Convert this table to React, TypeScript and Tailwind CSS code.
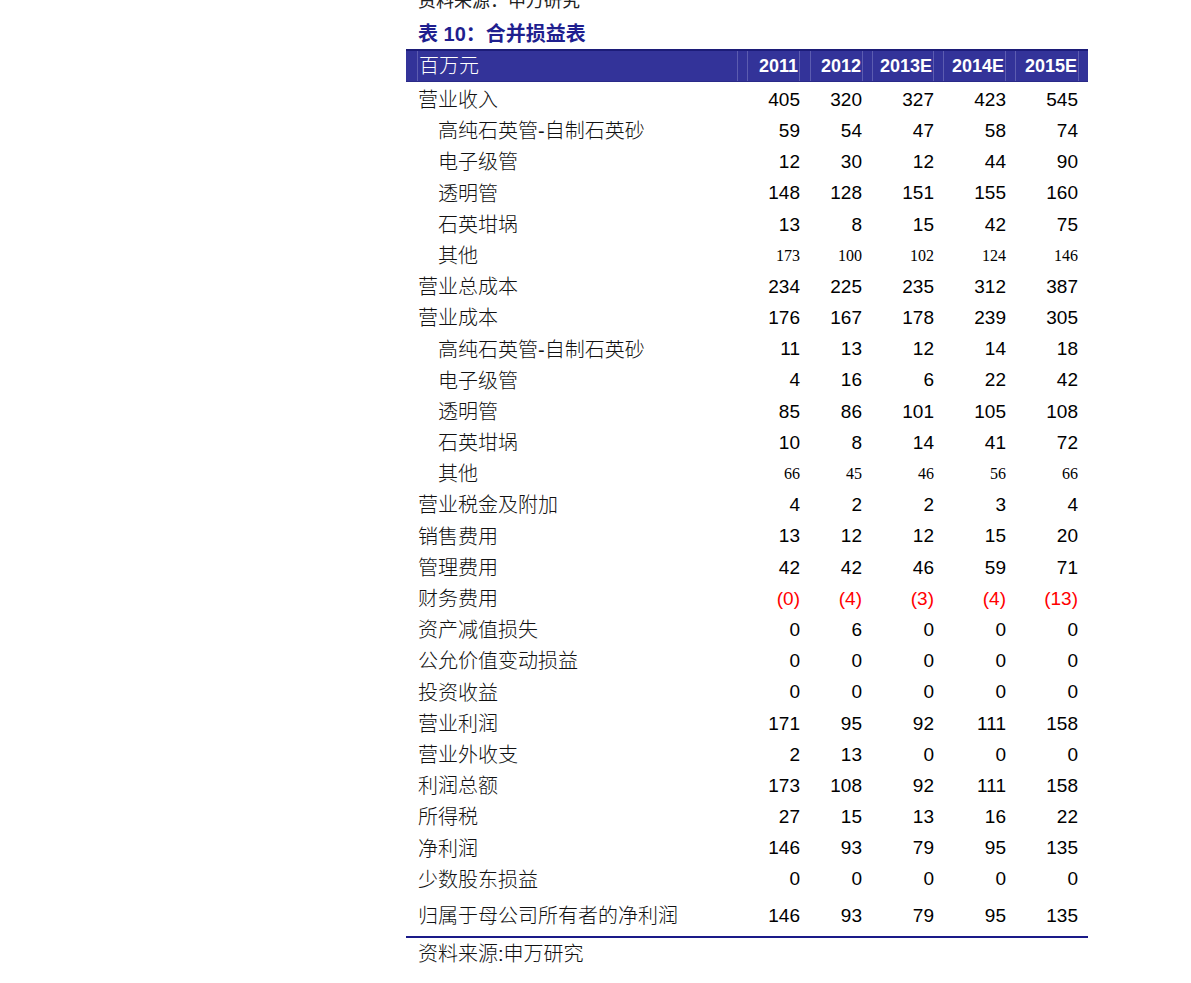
const CJK = "font-['Liberation_Sans','Noto_Sans_CJK_SC',sans-serif]";

type Row = {
  label: string;
  values: string[];
  indent?: boolean;
  serif?: boolean;
  red?: boolean;
};

const ROWS: Row[] = [
  { label: "营业收入", values: ["405", "320", "327", "423", "545"] },
  { label: "高纯石英管-自制石英砂", values: ["59", "54", "47", "58", "74"], indent: true },
  { label: "电子级管", values: ["12", "30", "12", "44", "90"], indent: true },
  { label: "透明管", values: ["148", "128", "151", "155", "160"], indent: true },
  { label: "石英坩埚", values: ["13", "8", "15", "42", "75"], indent: true },
  { label: "其他", values: ["173", "100", "102", "124", "146"], indent: true, serif: true },
  { label: "营业总成本", values: ["234", "225", "235", "312", "387"] },
  { label: "营业成本", values: ["176", "167", "178", "239", "305"] },
  { label: "高纯石英管-自制石英砂", values: ["11", "13", "12", "14", "18"], indent: true },
  { label: "电子级管", values: ["4", "16", "6", "22", "42"], indent: true },
  { label: "透明管", values: ["85", "86", "101", "105", "108"], indent: true },
  { label: "石英坩埚", values: ["10", "8", "14", "41", "72"], indent: true },
  { label: "其他", values: ["66", "45", "46", "56", "66"], indent: true, serif: true },
  { label: "营业税金及附加", values: ["4", "2", "2", "3", "4"] },
  { label: "销售费用", values: ["13", "12", "12", "15", "20"] },
  { label: "管理费用", values: ["42", "42", "46", "59", "71"] },
  { label: "财务费用", values: ["(0)", "(4)", "(3)", "(4)", "(13)"], red: true },
  { label: "资产减值损失", values: ["0", "6", "0", "0", "0"] },
  { label: "公允价值变动损益", values: ["0", "0", "0", "0", "0"] },
  { label: "投资收益", values: ["0", "0", "0", "0", "0"] },
  { label: "营业利润", values: ["171", "95", "92", "111", "158"] },
  { label: "营业外收支", values: ["2", "13", "0", "0", "0"] },
  { label: "利润总额", values: ["173", "108", "92", "111", "158"] },
  { label: "所得税", values: ["27", "15", "13", "16", "22"] },
  { label: "净利润", values: ["146", "93", "79", "95", "135"] },
  { label: "少数股东损益", values: ["0", "0", "0", "0", "0"] },
];

const LAST: Row = { label: "归属于母公司所有者的净利润", values: ["146", "93", "79", "95", "135"] };

function Line() {
  return <div className="w-px self-stretch bg-[#5c5cb0]" />;
}

function Header() {
  const year = "text-right pr-[1px] text-[18px] font-bold text-white font-['Liberation_Sans',sans-serif]";
  return (
    <div className="flex h-[33px] border-t-2 border-b border-t-[#1c1c78] border-b-[#2a2a88] bg-[#333399]">
      <div className="w-[11px]" />
      <Line />
      <div className={`flex w-[319px] items-center pl-[1px] text-[20px] font-light text-white ${CJK}`}>
        百万元
      </div>
      <Line />
      <div className="w-[9px]" />
      <Line />
      <div className={`flex w-[51px] items-center justify-end ${year}`}>2011</div>
      <Line />
      <div className="w-[10px]" />
      <Line />
      <div className={`flex w-[51px] items-center justify-end ${year}`}>2012</div>
      <Line />
      <div className="w-[9px]" />
      <Line />
      <div className={`flex w-[60px] items-center justify-end ${year}`}>2013E</div>
      <Line />
      <div className="w-[9px]" />
      <Line />
      <div className={`flex w-[61px] items-center justify-end ${year}`}>2014E</div>
      <Line />
      <div className="w-[9px]" />
      <Line />
      <div className={`flex w-[62px] items-center justify-end ${year}`}>2015E</div>
      <Line />
      <div className="w-[9px]" />
    </div>
  );
}

function DataRow({ row, tall }: { row: Row; tall?: boolean }) {
  const num = row.serif
    ? "font-['Liberation_Serif',serif] text-[16px]"
    : "font-['Liberation_Sans',sans-serif] text-[19px]";
  const color = row.red ? "text-[#ff0000]" : "text-black";
  return (
    <div
      className={`grid grid-cols-[341px_53px_62px_72px_72px_72px_10px] items-center pt-[3px] ${
        tall ? "h-[43px]" : "h-[31.2px]"
      }`}
    >
      <div
        className={`text-[20px] font-light text-[#111] ${CJK} ${row.indent ? "pl-[32px]" : "pl-[12px]"}`}
      >
        {row.label}
      </div>
      {row.values.map((v, i) => (
        <div key={i} className={`text-right ${num} ${color}`}>
          {v}
        </div>
      ))}
      <div />
    </div>
  );
}

export default function App() {
  return (
    <div className="min-h-[983px] w-[1191px] bg-white">
      <div className="ml-[406px] w-[682px]">
        <div className={`mt-[-9px] h-[20px] pl-[12px] text-[18px] leading-[20px] text-[#222] ${CJK}`}>
          资料来源：申万研究
        </div>
        <div
          className={`mt-[10px] h-[24px] pl-[12px] text-[20px] font-bold leading-[26px] text-[#1f1f8f] ${CJK}`}
        >
          表 10：合并损益表
        </div>
        <div className="mt-[4px]">
          <Header />
        </div>
        {ROWS.map((r, i) => (
          <DataRow key={i} row={r} />
        ))}
        <DataRow row={LAST} tall />
        <div className="h-[2px] bg-[#1a1a88]" />
        <div className={`mt-[6px] pl-[12px] text-[20px] font-light leading-[20px] text-[#111] ${CJK}`}>
          资料来源:申万研究
        </div>
      </div>
    </div>
  );
}
